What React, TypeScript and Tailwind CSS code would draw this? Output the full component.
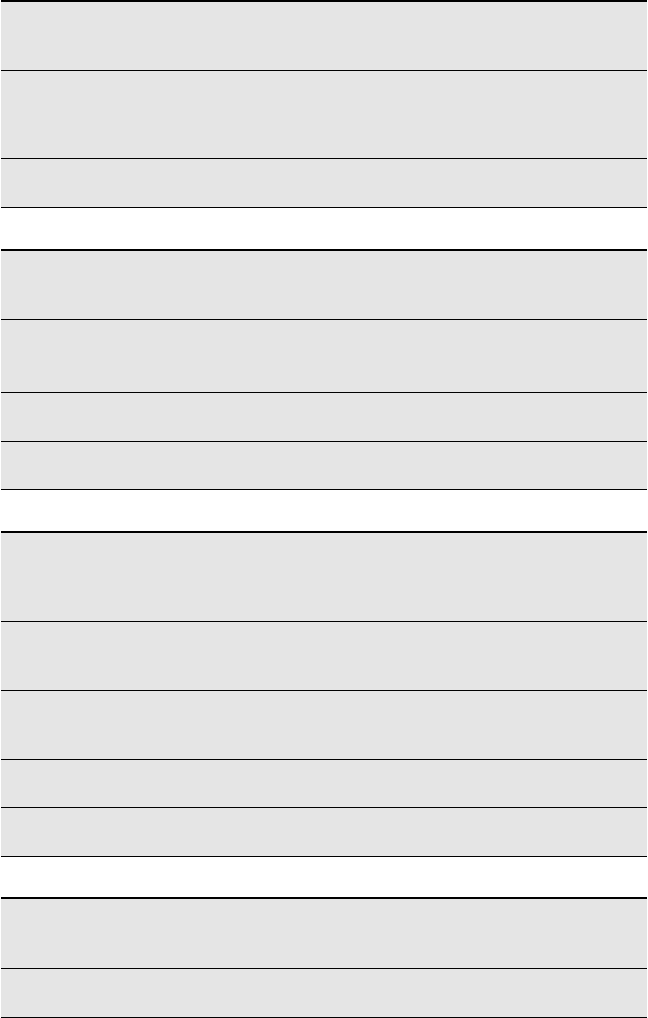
const sections: { gap: string; rows: string[] }[] = [
  { gap: "", rows: ["h-[69px]", "h-[88px]", "h-[49px]"] },
  { gap: "mt-[41px]", rows: ["h-[69px]", "h-[73px]", "h-[49px]", "h-[48px]"] },
  { gap: "mt-[41px]", rows: ["h-[89px]", "h-[69px]", "h-[69px]", "h-[48px]", "h-[49px]"] },
  { gap: "mt-[40px]", rows: ["h-[70px]", "h-[49px]"] },
];

function Section({ gap, rows }: { gap: string; rows: string[] }) {
  return (
    <div className={`${gap} border-t-2 border-black bg-[#e5e5e5]`}>
      {rows.map((h, i) => (
        <div key={i} className={`${h} grid grid-cols-[398px_1fr] border-b border-black`}>
          <div></div>
          <div></div>
        </div>
      ))}
    </div>
  );
}

export default function App() {
  return (
    <div className="min-h-[1018px] bg-white px-px font-['Liberation_Sans',sans-serif]">
      {sections.map((s, i) => (
        <Section key={i} gap={s.gap} rows={s.rows} />
      ))}
    </div>
  );
}
